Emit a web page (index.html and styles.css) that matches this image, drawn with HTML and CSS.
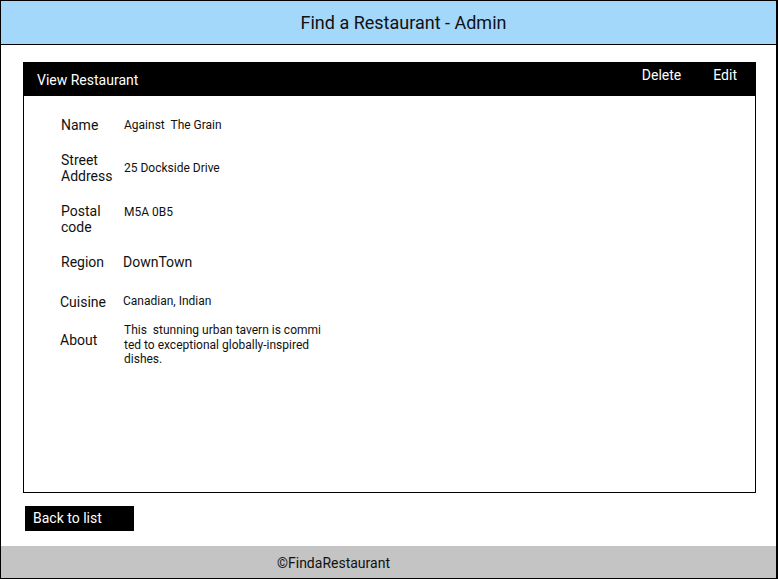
FILE: index.html
```html
<!DOCTYPE html>
<html lang="en">
<head>
<meta charset="utf-8">
<title>Find a Restaurant - Admin</title>
<link rel="stylesheet" href="styles.css">
</head>
<body>
<div class="page">
  <header class="topbar">
    <h1 class="title">Find a Restaurant - Admin</h1>
  </header>
  <main class="main">
    <section class="card">
      <div class="card-bar">
        <span class="card-title">View Restaurant</span>
        <div class="card-actions">
          <a class="action action-delete">Delete</a>
          <a class="action">Edit</a>
        </div>
      </div>
      <div class="card-body">
        <div class="row row-name">
          <div class="label">Name</div>
          <div class="value">Against&nbsp; The Grain</div>
        </div>
        <div class="row row-street">
          <div class="label">Street Address</div>
          <div class="value">25 Dockside Drive</div>
        </div>
        <div class="row row-postal">
          <div class="label">Postal code</div>
          <div class="value value-postal">M5A 0B5</div>
        </div>
        <div class="row row-region">
          <div class="label">Region</div>
          <div class="value value-large">DownTown</div>
        </div>
        <div class="row row-cuisine">
          <div class="label label-cuisine">Cuisine</div>
          <div class="value value-cuisine">Canadian, Indian</div>
        </div>
        <div class="row row-about">
          <div class="label label-about">About</div>
          <div class="value value-about">This&nbsp; stunning urban tavern is commi<br>ted to exceptional globally-inspired<br>dishes.</div>
        </div>
      </div>
    </section>
    <a class="back-btn">Back to list</a>
  </main>
  <footer class="footer">
    <span class="footer-text">©FindaRestaurant</span>
  </footer>
</div>
</body>
</html>
```

FILE: styles.css
```css
* { box-sizing: border-box; }
html, body { margin: 0; padding: 0; background: #fff; }
body { font-family: Roboto, "Liberation Sans", sans-serif; color: #000; }

.page {
  width: 778px;
  height: 579px;
  border: 1px solid #000;
  border-right-width: 2px;
  display: flex;
  flex-direction: column;
  overflow: hidden;
}

.topbar {
  height: 44px;
  background: #a3d8fb;
  border-bottom: 1px solid #000;
  display: flex;
  align-items: center;
  justify-content: center;
  padding-left: 30px;
}
.title {
  margin: 0;
  font-size: 18px;
  font-weight: 400;
  line-height: 22px;
  color: #111;
}

.main {
  padding: 17px 20px 0 22px;
  display: flex;
  flex-direction: column;
  align-items: flex-start;
}

.card {
  width: 733px;
  height: 431px;
  border: 1px solid #000;
  align-self: stretch;
}
.card-bar {
  height: 34px;
  margin: -1px -1px 0 -1px;
  background: #000;
  color: #fff;
  display: flex;
  justify-content: space-between;
  align-items: flex-start;
  font-size: 14px;
}
.card-title {
  padding-left: 14px;
  line-height: 16px;
  margin-top: 10px;
}
.card-actions {
  display: flex;
  gap: 32px;
  padding-right: 19px;
  margin-top: 5px;
  line-height: 16px;
}
.action { color: #fff; }

.card-body {
  padding: 15px 0 0 37px;
}
.row {
  display: flex;
  align-items: center;
}
.row-name { height: 28px; }
.row-street { height: 58px; }
.row-postal { height: 44px; }
.row-region { height: 42px; }
.row-cuisine { height: 36px; }
.row-about { height: 50px; align-items: flex-start; padding-top: 4px; }

.label {
  width: 63px;
  flex: none;
  font-size: 14px;
  line-height: 16px;
  color: #111;
}
.label-cuisine { margin-left: -1px; margin-right: 1px; padding-top: 2px; }
.label-about { margin-left: -1px; margin-right: 1px; margin-top: 9px; }

.value {
  font-size: 12px;
  line-height: 14px;
  color: #111;
}
.value-about { line-height: 14.5px; }
.row-postal { align-items: flex-start; padding-top: 6px; }
.value-postal { padding-top: 2px; }
.value-large { font-size: 14px; line-height: 16px; margin-left: -1px; }
.value-cuisine { margin-left: -1px; }

.back-btn {
  margin-top: 13px;
  margin-left: 2px;
  width: 109px;
  height: 25px;
  background: #000;
  color: #fff;
  font-size: 14px;
  line-height: 25px;
  padding-left: 8px;
}

.footer {
  margin-top: auto;
  height: 32px;
  background: #c4c4c4;
  display: flex;
  align-items: center;
  justify-content: center;
  padding-right: 110px;
  padding-top: 2px;
}
.footer-text {
  font-size: 14px;
  line-height: 16px;
  color: #111;
}
```
